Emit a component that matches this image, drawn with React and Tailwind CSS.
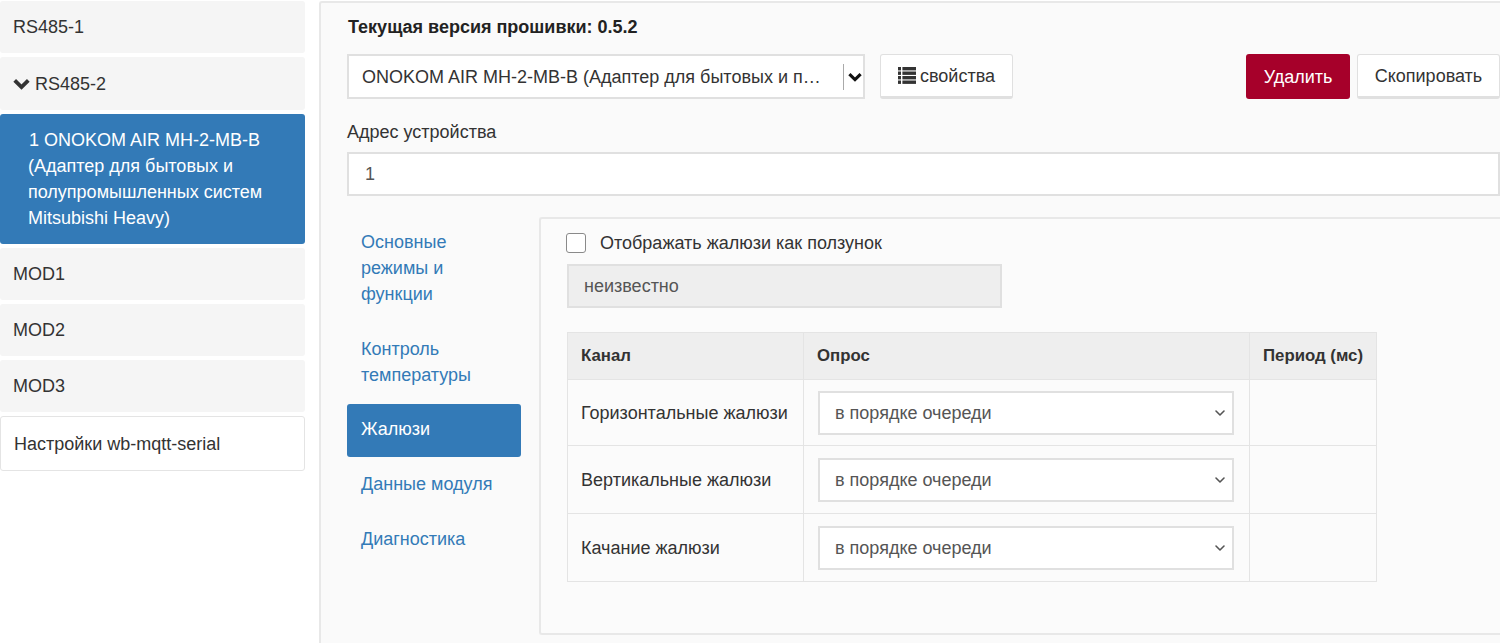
import { LuChevronDown } from "react-icons/lu";

const channels = ["Горизонтальные жалюзи", "Вертикальные жалюзи", "Качание жалюзи"];
const rowHeights = ["h-[66px]", "h-[68px]", "h-[68px]"];

function HeavyChevron({ className }) {
  return (
    <svg viewBox="0 0 16 11" className={className} fill="none" stroke="currentColor" strokeWidth="3.6">
      <path d="M1.6 2.2 8 8.4l6.4-6.2" />
    </svg>
  );
}

function ListIcon({ className }) {
  return (
    <svg viewBox="0 0 18 17" className={className} fill="currentColor">
      {[0, 4.5, 9, 13.5].map((y) => (
        <g key={y}>
          <rect x="0" y={y} width="3" height="3.4" />
          <rect x="4.4" y={y} width="13.6" height="3.4" />
        </g>
      ))}
    </svg>
  );
}

function SideItem({ children, tall }) {
  return (
    <div className={`flex items-center rounded-[3px] bg-[#f5f5f5] px-[13px] ${tall ? "h-[53px]" : "h-[52px]"}`}>
      {children}
    </div>
  );
}

function Sidebar() {
  return (
    <div className="flex w-[305px] shrink-0 flex-col gap-[4px] pt-[1px]">
      <SideItem>RS485-1</SideItem>
      <SideItem tall>
        <HeavyChevron className="mr-[5px] h-[12px] w-[17px] text-[#333]" />
        RS485-2
      </SideItem>
      <div className="h-[130px] rounded-[3px] bg-[#337ab7] px-[29px] py-[13px] text-white">
        <div>1 ONOKOM AIR MH-2-MB-B</div>
        <div className="-ml-[1px]">(Адаптер для бытовых и</div>
        <div className="-ml-[1px]">полупромышленных систем</div>
        <div className="-ml-[1px]">Mitsubishi Heavy)</div>
      </div>
      <SideItem>MOD1</SideItem>
      <SideItem>MOD2</SideItem>
      <SideItem>MOD3</SideItem>
      <div className="flex h-[55px] items-center rounded-[3px] border border-[#e4e4e4] bg-white px-[13px]">
        Настройки wb-mqtt-serial
      </div>
    </div>
  );
}

function Tabs() {
  return (
    <div className="flex w-[174px] shrink-0 flex-col text-[#337ab7]">
      <div className="px-[14px] pt-[13px] pb-[14px]">Основные режимы и функции</div>
      <div className="mt-[2px] px-[14px] pt-[13px] pb-[14px]">Контроль температуры</div>
      <div className="mt-[2px] h-[53px] rounded-[3px] bg-[#337ab7] px-[14px] py-[12px] text-white">Жалюзи</div>
      <div className="mt-[1px] px-[14px] pt-[13px] pb-[13px]">Данные модуля</div>
      <div className="mt-[3px] px-[14px] pt-[13px] pb-[13px]">Диагностика</div>
    </div>
  );
}

function PollSelect() {
  return (
    <div className="flex h-[44px] w-[416px] items-center justify-between border-2 border-[#e0e0e0] bg-white pr-[4px] pl-[15px] text-[#555]">
      в порядке очереди
      <LuChevronDown className="text-[16px] text-[#555]" strokeWidth={2.4} />
    </div>
  );
}

function ChannelTable() {
  return (
    <table className="mt-[24px] w-[810px] table-fixed border-collapse border border-[#e4e4e4]">
      <thead>
        <tr className="h-[47px] bg-[#eeeeee] text-left font-bold">
          <th className="w-[236px] border border-[#e4e4e4] pl-[13px] text-[16.8px]">Канал</th>
          <th className="w-[446px] border border-[#e4e4e4] pl-[13px] text-[16.8px]">Опрос</th>
          <th className="border border-[#e4e4e4] pl-[13px] text-[16.8px]">Период (мс)</th>
        </tr>
      </thead>
      <tbody>
        {channels.map((c, i) => (
          <tr key={c} className={rowHeights[i]}>
            <td className="border border-[#e4e4e4] pl-[13px]">{c}</td>
            <td className="border border-[#e4e4e4] pl-[14px]">
              <PollSelect />
            </td>
            <td className="border border-[#e4e4e4]"></td>
          </tr>
        ))}
      </tbody>
    </table>
  );
}

export default function App() {
  return (
    <div className="flex h-[643px] w-[1500px] overflow-hidden bg-white font-['Liberation_Sans',Arial,sans-serif] text-[18px] leading-[26px] text-[#333]">
      <Sidebar />
      <div className="mt-[1px] ml-[14px] flex-1 rounded-tl-[3px] border-t-2 border-l-2 border-[#e8e8e8] bg-[#fafafa] pl-[26px]">
        <div className="pt-[11px] pl-[1px] font-bold text-[#222]">Текущая версия прошивки: 0.5.2</div>
        <div className="mt-[14px] flex items-start">
          <div className="flex h-[45px] w-[518px] items-center border-2 border-[#e0e0e0] bg-white pl-[13px] text-[#333]">
            <span className="w-[479px] whitespace-nowrap">ONOKOM AIR MH-2-MB-B (Адаптер для бытовых и п…</span>
            <span className="ml-[2px] h-[26px] w-px bg-[#aaa]"></span>
            <HeavyChevron className="ml-[4px] h-[10px] w-[14px] text-[#111]" />
          </div>
          <button className="ml-[15px] flex h-[45px] w-[133px] items-center justify-center rounded-[3px] border border-[#e0e0e0] border-b-[3px] bg-white">
            <ListIcon className="mr-[4px] h-[17px] w-[18px]" />
            свойства
          </button>
          <button className="ml-auto h-[45px] w-[104px] rounded-[3px] bg-[#a6002a] text-white">Удалить</button>
          <button className="ml-[7px] h-[45px] w-[143px] rounded-[3px] border border-[#e0e0e0] border-b-[3px] bg-white">Скопировать</button>
        </div>
        <div className="mt-[20px]">Адрес устройства</div>
        <div className="mt-[7px] flex h-[44px] items-center border-2 border-[#e0e0e0] bg-white pl-[16px] text-[#555]">1</div>
        <div className="mt-[20px] flex items-start">
          <Tabs />
          <div className="mt-[1px] ml-[18px] h-[418px] flex-1 rounded-l-[3px] border-y-2 border-l-2 border-[#e8e8e8] bg-[#fbfbfb] pl-[26px]">
            <div className="mt-[11px] -ml-[1px] flex items-center">
              <span className="h-[20px] w-[20px] rounded-[3px] border border-[#8a8a8a] bg-white"></span>
              <span className="ml-[14px]">Отображать жалюзи как ползунок</span>
            </div>
            <div className="mt-[8px] flex h-[44px] w-[435px] items-center border-2 border-[#e0e0e0] bg-[#eeeeee] pl-[15px] text-[#555]">неизвестно</div>
            <ChannelTable />
          </div>
        </div>
      </div>
    </div>
  );
}
